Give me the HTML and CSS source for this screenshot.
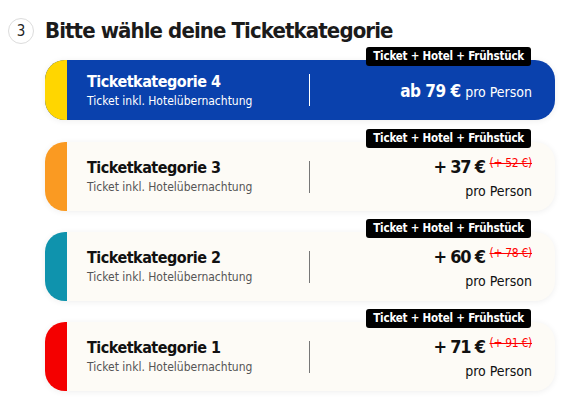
FILE: index.html
```html
<!DOCTYPE html>
<html lang="de">
<head>
<meta charset="utf-8">
<link rel="stylesheet" href="styles.css">
</head>
<body>
<div class="page">
  <div class="step-head">
    <span class="step-num">3</span>
    <h2 class="step-title">Bitte wähle deine Ticketkategorie</h2>
  </div>
  <div class="cat-list">
    <div class="cat-item">
      <div class="cat-card cat-active">
        <div class="cat-stripe stripe-yellow"></div>
        <div class="cat-body">
          <div class="cat-info">
            <div class="cat-name">Ticketkategorie 4</div>
            <div class="cat-desc">Ticket inkl. Hotelübernachtung</div>
          </div>
          <div class="cat-divider"></div>
          <div class="cat-price">
            <span class="price-main">ab 79 €</span> <span class="price-unit">pro Person</span>
          </div>
        </div>
      </div>
      <span class="cat-badge">Ticket + Hotel + Frühstück</span>
    </div>
    <div class="cat-item">
      <div class="cat-card">
        <div class="cat-stripe stripe-orange"></div>
        <div class="cat-body">
          <div class="cat-info">
            <div class="cat-name">Ticketkategorie 3</div>
            <div class="cat-desc">Ticket inkl. Hotelübernachtung</div>
          </div>
          <div class="cat-divider"></div>
          <div class="cat-price stacked">
            <div class="price-line"><span class="price-main">+ 37 €</span> <s class="price-old">(+ 52 €)</s></div>
            <div class="price-unit">pro Person</div>
          </div>
        </div>
      </div>
      <span class="cat-badge">Ticket + Hotel + Frühstück</span>
    </div>
    <div class="cat-item">
      <div class="cat-card">
        <div class="cat-stripe stripe-teal"></div>
        <div class="cat-body">
          <div class="cat-info">
            <div class="cat-name">Ticketkategorie 2</div>
            <div class="cat-desc">Ticket inkl. Hotelübernachtung</div>
          </div>
          <div class="cat-divider"></div>
          <div class="cat-price stacked">
            <div class="price-line"><span class="price-main">+ 60 €</span> <s class="price-old">(+ 78 €)</s></div>
            <div class="price-unit">pro Person</div>
          </div>
        </div>
      </div>
      <span class="cat-badge">Ticket + Hotel + Frühstück</span>
    </div>
    <div class="cat-item">
      <div class="cat-card">
        <div class="cat-stripe stripe-red"></div>
        <div class="cat-body">
          <div class="cat-info">
            <div class="cat-name">Ticketkategorie 1</div>
            <div class="cat-desc">Ticket inkl. Hotelübernachtung</div>
          </div>
          <div class="cat-divider"></div>
          <div class="cat-price stacked">
            <div class="price-line"><span class="price-main">+ 71 €</span> <s class="price-old">(+ 91 €)</s></div>
            <div class="price-unit">pro Person</div>
          </div>
        </div>
      </div>
      <span class="cat-badge">Ticket + Hotel + Frühstück</span>
    </div>
  </div>
</div>
</body>
</html>
```
FILE: styles.css
```css
* { box-sizing: border-box; }
html, body { margin: 0; padding: 0; background: #fff; }
body {
  font-family: "DejaVu Sans Condensed", "Liberation Sans", sans-serif;
  color: #1b1b1b;
}
.page { width: 571px; height: 417px; padding: 18px 16px 0 8px; }
.step-head { display: flex; align-items: center; gap: 11px; height: 26px; }
.step-num {
  width: 26px; height: 26px; border-radius: 50%;
  border: 1px solid #dcdcdc;
  display: flex; align-items: center; justify-content: center;
  font-size: 15px; color: #222;
}
.step-title { margin: 0; font-size: 22px; letter-spacing: -0.9px; font-weight: 700; color: #1b1b1b; line-height: 26px; }
.cat-list { display: flex; flex-direction: column; gap: 21px; margin-top: 16px; padding-left: 37px; }
.cat-item { position: relative; }
.cat-card {
  display: flex; height: 69px; border-radius: 20px; overflow: hidden;
  background: #fdfbf6;
  box-shadow: 0 1px 6px rgba(0, 0, 0, 0.07);
}
.cat-active { height: 60px; background: #0a41ad; color: #fff; margin-bottom: 1px; }
.cat-stripe { width: 22px; flex: none; }
.stripe-yellow { background: #ffd600; }
.stripe-orange { background: #fa9a22; }
.stripe-teal { background: #0f93ad; }
.stripe-red { background: #f40000; }
.cat-body { flex: 1; display: flex; align-items: center; padding: 0 23px 0 20px; }
.cat-info { width: 222px; }
.cat-name { font-size: 16px; letter-spacing: -0.5px; font-weight: 700; line-height: 20px; color: #111; }
.cat-desc { font-size: 12px; line-height: 16px; color: #555; margin-top: 1px; }
.cat-active .cat-name, .cat-active .cat-desc { color: #fff; }
.cat-divider { width: 1px; height: 32px; background: #777; flex: none; }
.cat-active .cat-divider { background: #fff; }
.cat-price { flex: 1; text-align: right; }
.price-main { font-size: 17px; letter-spacing: -0.5px; font-weight: 700; }
.price-unit { font-size: 14px; }
.cat-active .cat-price { color: #fff; padding-top: 2px; }
.stacked { padding-top: 0; }
.stacked .price-main { font-size: 18px; letter-spacing: -1.2px; color: #111; }
.price-line { line-height: 24px; }
.price-old { color: #f00; font-size: 12px; letter-spacing: -0.3px; vertical-align: 6px; text-decoration-thickness: 1px; }
.stacked .price-unit { line-height: 22px; color: #111; }
.cat-badge {
  position: absolute; top: -13px; right: 24px;
  background: #000; color: #fff; border-radius: 3px;
  font-size: 11.5px; letter-spacing: -0.2px; font-weight: 700; line-height: 19px; padding: 0 7px;
}
```
